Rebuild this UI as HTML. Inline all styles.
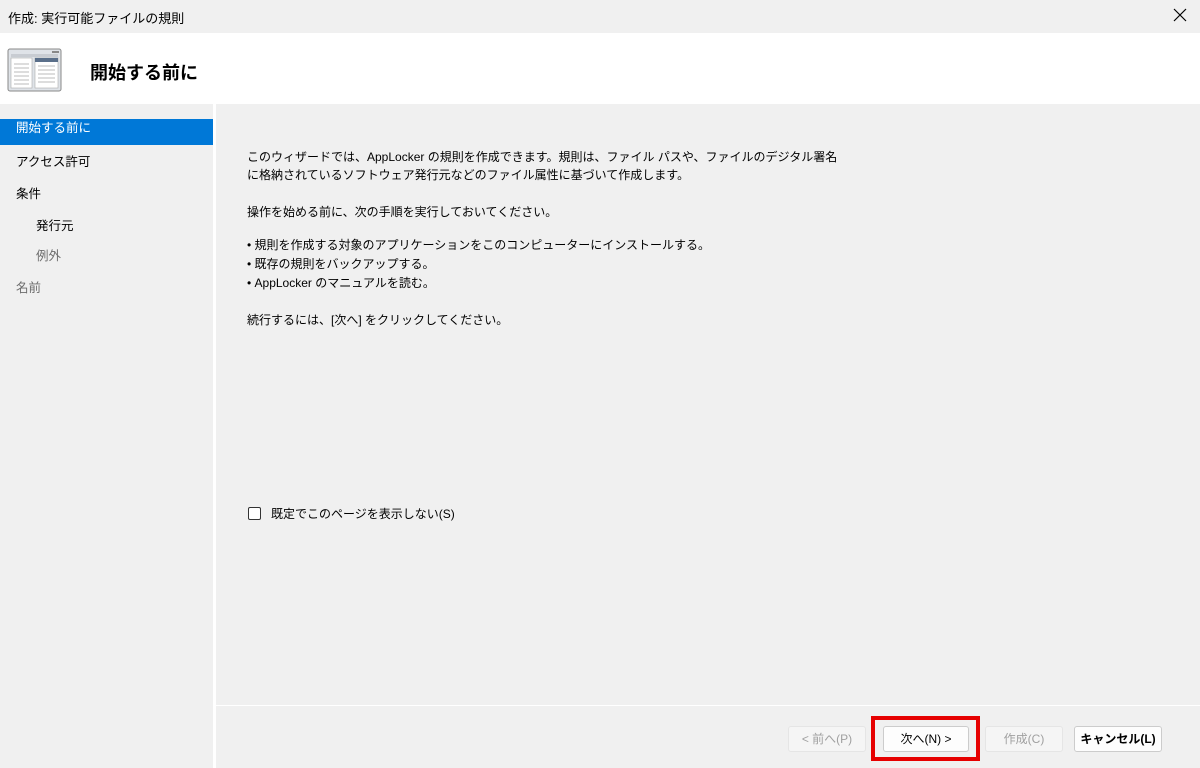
<!DOCTYPE html>
<html><head><meta charset="utf-8"><style>
*{margin:0;padding:0;box-sizing:border-box}
body{width:1200px;height:768px;background:#f0f0f0;font-family:"Liberation Sans","Noto Sans CJK JP",sans-serif;position:relative;overflow:hidden;color:#000}
.a{position:absolute}
.t{font-size:12.5px;white-space:nowrap}
.c{font-size:12px;white-space:nowrap}
.btn{position:absolute;top:726px;height:26px;border:1px solid #ccc;border-radius:3px;background:#fdfdfd;font-size:12px;text-align:center;line-height:24px;white-space:nowrap}
.dis{color:#a0a0a0;background:#f5f5f5;border-color:#e5e5e5}
</style></head><body>
<div class="a" style="left:8px;top:8px;font-size:13px">作成: 実行可能ファイルの規則</div>
<svg class="a" style="left:1173px;top:8px" width="14" height="14"><path d="M1 1L13 13M13 1L1 13" stroke="#000" stroke-width="1.2"/></svg>
<div class="a" style="left:0;top:33px;width:1200px;height:71px;background:#fff"></div>
<svg class="a" style="left:7px;top:48px" width="56" height="46">
<rect x="1" y="1" width="53" height="42" rx="2" fill="#dfe3e8" stroke="#888"/>
<rect x="4" y="6" width="47" height="3" fill="#c8ccd2"/>
<rect x="4" y="10" width="21" height="30" fill="#fff" stroke="#aaa" stroke-width=".6"/>
<rect x="28" y="10" width="23" height="30" fill="#fff" stroke="#aaa" stroke-width=".6"/>
<rect x="28" y="10" width="23" height="4" fill="#5a6f8a"/>
<g stroke="#bbb"><path d="M7 16H22M7 20H22M7 24H22M7 28H22M7 32H22M7 36H22M31 18H48M31 22H48M31 26H48M31 30H48M31 34H48"/></g>
<rect x="45" y="3" width="7" height="2" fill="#888"/>
</svg>
<div class="a" style="left:90px;top:59px;font-size:18px;font-weight:bold">開始する前に</div>
<div class="a" style="left:213px;top:104px;width:3px;height:664px;background:#fff"></div>
<div class="a" style="left:0;top:119px;width:213px;height:26px;background:#0078d7"></div>
<div class="a t" style="left:16px;top:119px;color:#fff;line-height:18px">開始する前に</div>
<div class="a t" style="left:16px;top:151px">アクセス許可</div>
<div class="a t" style="left:16px;top:183px">条件</div>
<div class="a t" style="left:36px;top:215px">発行元</div>
<div class="a t" style="left:36px;top:245px;color:#6d6d6d">例外</div>
<div class="a t" style="left:16px;top:277px;color:#6d6d6d">名前</div>
<div class="a c" style="left:247px;top:148px;line-height:18px">このウィザードでは、AppLocker の規則を作成できます。規則は、ファイル パスや、ファイルのデジタル署名<br>に格納されているソフトウェア発行元などのファイル属性に基づいて作成します。</div>
<div class="a c" style="left:247px;top:203px">操作を始める前に、次の手順を実行しておいてください。</div>
<div class="a c" style="left:247px;top:236px;line-height:19px">• 規則を作成する対象のアプリケーションをこのコンピューターにインストールする。<br>• 既存の規則をバックアップする。<br>• AppLocker のマニュアルを読む。</div>
<div class="a c" style="left:247px;top:311px">続行するには、[次へ] をクリックしてください。</div>
<div class="a" style="left:248px;top:507px;width:13px;height:13px;border:1px solid #333;border-radius:2px;background:#fff"></div>
<div class="a c" style="left:271px;top:505px">既定でこのページを表示しない(S)</div>
<div class="a" style="left:216px;top:705px;width:984px;height:1px;background:#fff"></div>
<div class="btn dis" style="left:788px;width:78px">&lt; 前へ(P)</div>
<div class="btn" style="left:883px;width:86px">次へ(N) &gt;</div>
<div class="btn dis" style="left:985px;width:78px">作成(C)</div>
<div class="btn" style="left:1074px;width:88px;font-weight:bold">キャンセル(L)</div>
<div class="a" style="left:871px;top:716px;width:109px;height:45px;border:4px solid #e60000"></div>
</body></html>
